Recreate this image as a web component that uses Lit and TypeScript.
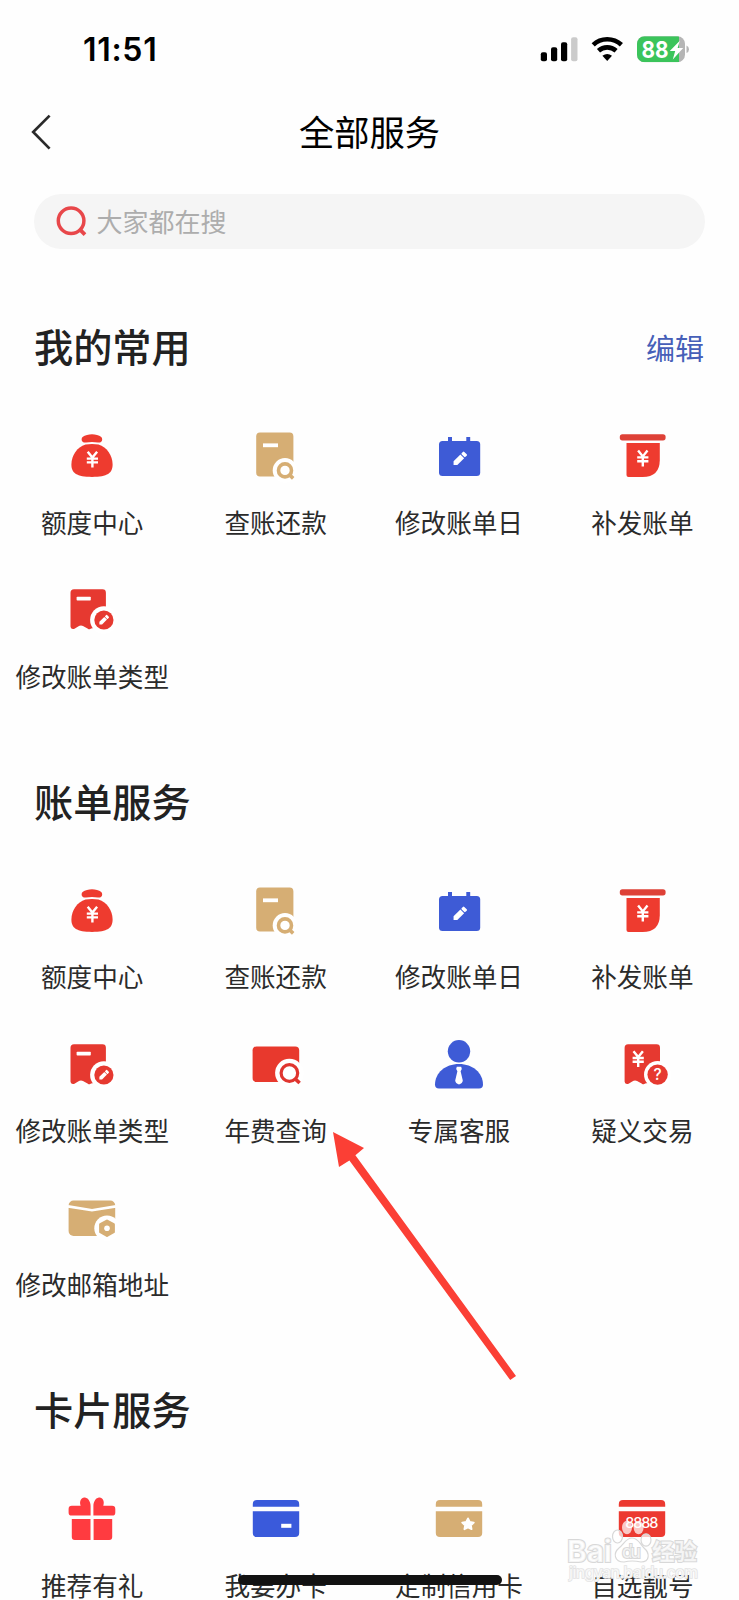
import { LitElement, html, svg, css } from "lit";
import { customElement, property } from "lit/decorators.js";

const RED = "#ee3b2f";
const CRIMSON = "#e63930";
const GOLD = "#d6ae74";
const BLUE = "#3e5bd6";

const yen = (x: number, y: number) => svg`
  <path transform="translate(${x} ${y})" d="M1.3 .8L6 6.6L10.7 .8M.4 7.6H11.6M.4 11.4H11.6M6 6.6V16.6"
    fill="none" stroke="#fff" stroke-width="2.4"/>`;

const pencil = (x: number, y: number, s: number) => svg`
  <g transform="translate(${x} ${y}) rotate(-45) scale(${s})" fill="#fff">
    <path d="M-9 0L-6.2 -2.8H4V2.8H-6.2Z"/>
    <rect x="5" y="-2.8" width="3.8" height="5.6" rx="1"/>
  </g>`;

const bill = (x: number) => svg`
  <path transform="translate(${x} 0)" fill=${CRIMSON}
    d="M3.5 9.3H32Q35.4 9.3 35.4 12.7V46L20.5 48.6Q19.2 50 17 48.4L12.5 45.9Q10 44.7 7.6 46.5L4 48.7Q0 49.8 0 46.5V12.8Q0 9.3 3.5 9.3Z"/>`;

const card = (color: string) => svg`
  <path fill=${color} d="M6.8 17.8V15.2Q6.8 11 11 11H49Q53.2 11 53.2 15.2V17.8ZM6.8 22.2H53.2V44Q53.2 48 49 48H11Q6.8 48 6.8 44Z"/>`;

const ICONS: Record<string, unknown> = {
  bag: svg`
    <path fill=${RED} d="M25 8.9Q30 7.6 35 8.9Q40.2 10 40.2 13.2Q40.2 16.8 36 16.6Q30 15.2 24 16.6Q19.6 16.8 19.6 13.2Q19.6 10 25 8.9Z"/>
    <path fill=${RED} d="M23.5 18.6Q30 17.6 36.5 18.6C45 21 50.6 30 50.6 38.5C50.6 47 45.5 50.9 30 50.9S9.4 47 9.4 38.5C9.4 30 15 21 23.5 18.6Z"/>
    ${yen(24.4, 25)}`,
  query: svg`
    <rect x="10.2" y="6.6" width="37.2" height="44" rx="3.8" fill=${GOLD}/>
    <rect x="17" y="17.4" width="15" height="3.8" fill="#fff"/>
    <circle cx="39" cy="44.4" r="12.3" fill="#fff"/>
    <circle cx="39" cy="44.4" r="6.5" fill="none" stroke=${GOLD} stroke-width="3.6"/>
    <path d="M44 49.4L47.2 52.4" stroke=${GOLD} stroke-width="3.6"/>`,
  calendar: svg`
    <rect x="10" y="15" width="41.2" height="35" rx="3.5" fill=${BLUE}/>
    <path fill=${BLUE} d="M19 11H23V16H19ZM37.3 11H41.2V16H37.3Z"/>
    ${pencil(30.6, 33, 0.95)}`,
  slot: svg`
    <rect x="7.8" y="8.2" width="45.8" height="6.2" rx="2.6" fill="#de4137"/>
    <path fill=${RED} d="M14.5 17H47.8V34Q47.8 51 30.5 51H16.5Q14.5 51 14.5 49Z"/>
    ${yen(24.8, 23.8)}`,
  billEdit: svg`
    ${bill(8.5)}
    <rect x="14.6" y="16.8" width="14.2" height="3.8" rx=".8" fill="#fff"/>
    <circle cx="41.9" cy="40" r="13.8" fill="#fff"/>
    <circle cx="41.9" cy="40" r="9.6" fill=${CRIMSON}/>
    ${pencil(41.7, 40.2, 0.68)}`,
  fee: svg`
    <rect x="6.6" y="11.5" width="46.6" height="35.6" rx="4" fill="#e8392d"/>
    <circle cx="43.4" cy="38" r="14.3" fill="#fff"/>
    <circle cx="43.4" cy="38" r="8.3" fill="none" stroke="#e0352f" stroke-width="3.2"/>
    <path d="M49 43.6L53.6 48" stroke="#e0352f" stroke-width="3.6"/>`,
  agent: svg`
    <circle cx="30" cy="16.3" r="11.2" fill=${BLUE}/>
    <path fill=${BLUE} d="M10 53.4Q6 53.4 6 49.4C6.2 38 16 29 30 29S53.8 38 54 49.4Q54 53.4 50 53.4Z"/>
    <path fill="#fff" d="M27.8 31.8H32.2L32.8 34L31.6 36.2L33.8 45.5Q33.6 48.4 30 49.4Q26.4 48.4 26.2 45.5L28.4 36.2L27.2 34Z"/>`,
  dispute: svg`
    ${bill(12.6)}
    ${yen(20.2, 15.4)}
    <circle cx="45.6" cy="39.6" r="13.6" fill="#fff"/>
    <circle cx="45.6" cy="39.6" r="10.2" fill=${CRIMSON}/>
    <text x="45.6" y="45.2" text-anchor="middle" font-size="15.5" font-weight="500" fill="#fff" font-family="Inter, sans-serif">?</text>`,
  mail: svg`
    <rect x="6.6" y="11.6" width="46.6" height="35.4" rx="5" fill=${GOLD}/>
    <path d="M6 17.4L30 21.3L54 17.4" fill="none" stroke="#fff" stroke-width="2.6"/>
    <circle cx="45" cy="39.2" r="12.7" fill="#fff"/>
    <path d="M45 31.8L51.6 35.5V42.9L45 46.6L38.4 42.9V35.5Z" fill=${GOLD} stroke=${GOLD} stroke-width="2.6" stroke-linejoin="round"/>
    <circle cx="45" cy="39.2" r="2.8" fill="#fff"/>`,
  gift: svg`
    <g fill="#ff3b40">
      <path d="M6.6 20Q6.6 16.8 9.8 16.8H18.6C17 12 19.5 8 23 8.6C26.8 9.3 28.6 13.5 28.6 17V26.6H9.8Q6.6 26.6 6.6 23.4Z"/>
      <path d="M53.3 20Q53.3 16.8 50.1 16.8H41.3C42.9 12 40.4 8 36.9 8.6C33.1 9.3 31.4 13.5 31.4 17V26.6H50.1Q53.3 26.6 53.3 23.4Z"/>
      <path d="M9.8 30H28.5V51H12.8Q9.8 51 9.8 48ZM31.6 30H50.2V48Q50.2 51 47.2 51H31.6Z"/>
    </g>`,
  apply: svg`${card("#3a5adb")}<rect x="35.2" y="34.8" width="10.2" height="4" fill="#fff"/>`,
  custom: svg`${card(GOLD)}
    <path d="M39 29.4L40.8 33L44.8 33.6L41.9 36.3L42.6 40.2L39 38.4L35.4 40.2L36.1 36.3L33.2 33.6L37.2 33Z"
      fill="#fff" stroke="#fff" stroke-width="1.8" stroke-linejoin="round"/>`,
  lucky: svg`${card("#ec3a31")}
    <text x="29.8" y="39.3" text-anchor="middle" textLength="33" font-size="14.5" font-weight="500" fill="#fff" font-family="Inter, sans-serif">8888</text>`,
};

interface Service { icon: string; label: string }
interface Group { title: string; action?: string; items: Service[] }

const COMMON: Service[] = [
  { icon: "bag", label: "额度中心" },
  { icon: "query", label: "查账还款" },
  { icon: "calendar", label: "修改账单日" },
  { icon: "slot", label: "补发账单" },
  { icon: "billEdit", label: "修改账单类型" },
];

const GROUPS: Group[] = [
  { title: "我的常用", action: "编辑", items: COMMON },
  {
    title: "账单服务",
    items: [
      ...COMMON,
      { icon: "fee", label: "年费查询" },
      { icon: "agent", label: "专属客服" },
      { icon: "dispute", label: "疑义交易" },
      { icon: "mail", label: "修改邮箱地址" },
    ],
  },
  {
    title: "卡片服务",
    items: [
      { icon: "gift", label: "推荐有礼" },
      { icon: "apply", label: "我要办卡" },
      { icon: "custom", label: "定制信用卡" },
      { icon: "lucky", label: "自选靓号" },
    ],
  },
];

@customElement("service-tile")
class ServiceTile extends LitElement {
  @property() icon = "";
  @property() label = "";
  static styles = css`
    :host { display: flex; flex-direction: column; align-items: center; gap: 17.7px; padding-top: 10px; height: 153.9px; box-sizing: border-box; min-width: 0; }
    .icon { display: block; width: 60px; height: 60px; flex: none; }
    .label { font-size: 25.6px; line-height: 36px; color: #2b2b2b; white-space: nowrap; }
  `;
  render() {
    return html`<svg class="icon" viewBox="0 0 60 60">${ICONS[this.icon]}</svg>
      <span class="label">${this.label}</span>`;
  }
}

@customElement("service-group")
class ServiceGroup extends LitElement {
  @property({ attribute: false }) group!: Group;
  static styles = css`
    :host { display: block; }
    .head { display: flex; justify-content: space-between; align-items: flex-start; height: 59px; padding: 0 35px 0 34px; margin-bottom: 40px; }
    .title { margin: 0; font-size: 39.2px; line-height: 56px; font-weight: 500; color: #222; }
    .action { margin-top: 10px; font-size: 29px; line-height: 40px; color: #465fb8; }
    .grid { display: grid; grid-template-columns: repeat(4, 183.4px); padding-left: .5px; }
  `;
  render() {
    const g = this.group;
    return html`<div class="head">
        <h2 class="title">${g.title}</h2>
        ${g.action ? html`<span class="action">${g.action}</span>` : ""}
      </div>
      <div class="grid">
        ${g.items.map((i) => html`<service-tile .icon=${i.icon} .label=${i.label}></service-tile>`)}
      </div>`;
  }
}

@customElement("app-root")
class AppRoot extends LitElement {
  static styles = css`
    :host { display: block; position: relative; width: 739px; height: 1600px; overflow: hidden; background: #fefefe; font-family: "Noto Sans CJK SC", sans-serif; }
    .status { display: flex; align-items: center; justify-content: space-between; height: 96px; padding: 3px 50px 0 83px; box-sizing: border-box; }
    .time { font: 600 32px/40px Inter, sans-serif; color: #000; letter-spacing: .7px; }
    .signals { display: block; width: 150px; height: 30px; }
    .nav { display: grid; grid-template-columns: 60px 1fr 60px; align-items: center; height: 70px; }
    .back { display: block; width: 24px; height: 38px; margin: 1px 0 0 30px; }
    .nav-title { margin: 0; text-align: center; font-size: 35.3px; line-height: 50px; font-weight: 400; color: #000; }
    .search { display: flex; align-items: center; gap: 8.5px; height: 55px; margin: 28px 34px 0; padding-left: 21px; border-radius: 28px; background: #f5f5f5; box-sizing: border-box; }
    .lens { display: block; width: 33px; height: 33px; }
    .hint { font-size: 26px; line-height: 36px; padding-bottom: 2px; color: #adadad; }
    .groups { display: flex; flex-direction: column; gap: 48px; padding-top: 68px; }
    .overlay { position: absolute; left: 0; top: 0; width: 739px; height: 1600px; pointer-events: none; }
  `;

  render() {
    return html`
      <div class="status">
        <span class="time">11:51</span>
        <svg class="signals" viewBox="0 0 150 30">
          <rect x="1.8" y="17.2" width="6.2" height="9" rx="2"/>
          <rect x="12" y="12.2" width="6.2" height="14" rx="2"/>
          <rect x="22" y="7.2" width="6.2" height="19" rx="2"/>
          <rect x="32.1" y="2.2" width="6.4" height="24" rx="2" fill="#cbcbcb"/>
          <g fill="none" stroke="#000" stroke-width="4.6">
            <path d="M54.2 9.8Q60 4.3 68.2 4.3T82.4 9.8"/>
            <path d="M59.5 15.8Q63.2 12.4 68.2 12.4T77.1 15.8"/>
          </g>
          <path d="M63.4 20.7Q68.2 17.2 73 20.7L68.2 26Z"/>
          <clipPath id="cell"><rect x="98" y="1.2" width="48" height="26" rx="7.5"/></clipPath>
          <g clip-path="url(#cell)">
            <rect x="98" y="1.2" width="48" height="26" fill="#b5b5b5"/>
            <rect x="98" y="1.2" width="42" height="26" fill="#3bc45b"/>
          </g>
          <path d="M147.5 10.4Q150 11.5 150 14.2T147.5 18Z" fill="#b5b5b5"/>
          <text x="102.4" y="22.6" font-family="Inter, sans-serif" font-weight="700" font-size="23.5" textLength="27" lengthAdjust="spacingAndGlyphs" fill="#fff">88</text>
          <path d="M140.8 5.8L130.8 16H136.2L133.8 24.4L144.2 13H138.6Z" fill="#fff"/>
        </svg>
      </div>
      <div class="nav">
        <svg class="back" viewBox="0 0 24 38"><path d="M19.6 2.6L3.2 19L19.6 35.6" fill="none" stroke="#2a2a2a" stroke-width="2.7"/></svg>
        <h1 class="nav-title">全部服务</h1>
      </div>
      <div class="search">
        <svg class="lens" viewBox="0 0 33 33"><circle cx="16.1" cy="15.8" r="12.8" fill="none" stroke="#e8474a" stroke-width="3.5"/><path d="M25 24.6L30 29.6" stroke="#e8474a" stroke-width="3.8"/></svg>
        <span class="hint">大家都在搜</span>
      </div>
      <div class="groups">
        ${GROUPS.map((g) => html`<service-group .group=${g}></service-group>`)}
      </div>
      <svg class="overlay" viewBox="0 0 739 1600">
        <path d="M333 1132L364 1148L355.4 1155.2L516 1376L510.2 1380L349.4 1160.4L339 1167Z" fill="#fb3f35"/>
        <rect x="238" y="1575" width="264" height="10" rx="5" fill="#121212"/>
        <g fill="#fff" fill-opacity=".72" stroke="#d8d8d8" stroke-width="1.2">
          <ellipse cx="617.5" cy="1536.5" rx="5" ry="6.5"/>
          <ellipse cx="627" cy="1527.5" rx="5" ry="6.8" stroke="none"/>
          <ellipse cx="638.6" cy="1527.5" rx="5" ry="6.8" stroke="none"/>
          <ellipse cx="646" cy="1540" rx="5" ry="6.2"/>
          <path d="M632 1538C638 1538 640 1544 644 1548C650 1553 650 1562 641 1562Q632 1560 624 1562C614 1562 613 1553 619 1548C624 1544 626 1538 632 1538Z"/>
          <g paint-order="stroke" stroke-width="2">
            <text x="567" y="1561.5" font-family="Inter, sans-serif" font-weight="700" font-size="30" textLength="45">Bai</text>
            <text x="622" y="1558" font-family="Inter, sans-serif" font-weight="400" font-size="18" textLength="19">du</text>
            <text x="652" y="1560" font-family="'Noto Sans CJK SC', sans-serif" font-weight="700" font-size="22.5" textLength="45">经验</text>
            <text x="569" y="1577.5" font-family="Inter, sans-serif" font-weight="500" font-size="15.5" textLength="129" stroke-width="1.4" stroke="#e2e2e2">jingyan.baidu.com</text>
          </g>
        </g>
      </svg>
    `;
  }
}
